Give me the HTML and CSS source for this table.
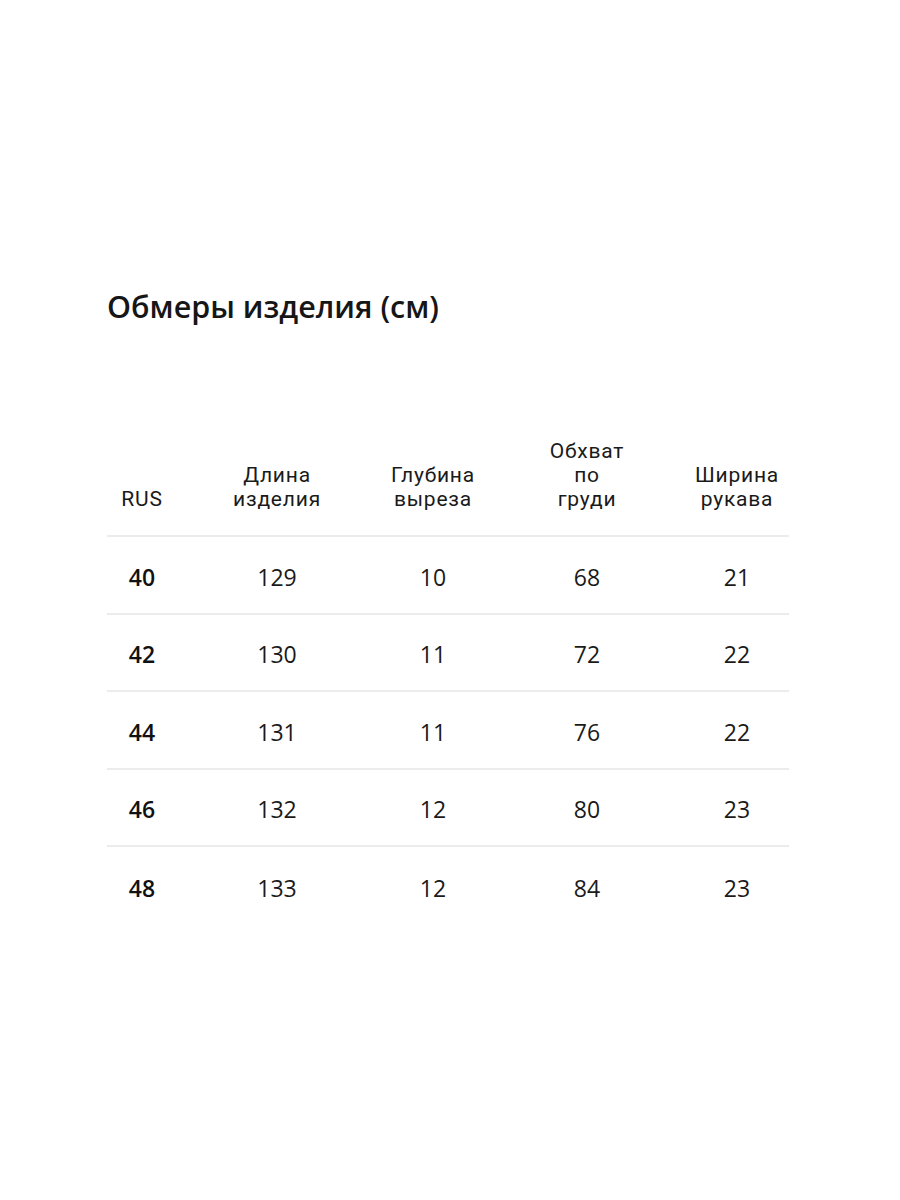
FILE: index.html
```html
<!DOCTYPE html>
<html lang="ru">
<head>
<meta charset="utf-8">
<link rel="stylesheet" href="styles.css">
</head>
<body>
<main class="page">
  <h1 class="title">Обмеры изделия (см)</h1>
  <div class="table">
    <div class="row head">
      <div class="cell">RUS</div>
      <div class="cell">Длина<br>изделия</div>
      <div class="cell">Глубина<br>выреза</div>
      <div class="cell">Обхват<br>по<br>груди</div>
      <div class="cell">Ширина<br>рукава</div>
    </div>
    <div class="row"><div class="cell size">40</div><div class="cell">129</div><div class="cell">10</div><div class="cell">68</div><div class="cell">21</div></div>
    <div class="row"><div class="cell size">42</div><div class="cell">130</div><div class="cell">11</div><div class="cell">72</div><div class="cell">22</div></div>
    <div class="row"><div class="cell size">44</div><div class="cell">131</div><div class="cell">11</div><div class="cell">76</div><div class="cell">22</div></div>
    <div class="row"><div class="cell size">46</div><div class="cell">132</div><div class="cell">12</div><div class="cell">80</div><div class="cell">23</div></div>
    <div class="row last"><div class="cell size">48</div><div class="cell">133</div><div class="cell">12</div><div class="cell">84</div><div class="cell">23</div></div>
  </div>
</main>
</body>
</html>
```

FILE: styles.css
```css
html, body {
  margin: 0;
  padding: 0;
  background: #ffffff;
}
body {
  font-family: "Open Sans", "Noto Sans", sans-serif;
  color: #111111;
}
.page {
  width: 900px;
  height: 1200px;
  box-sizing: border-box;
  padding: 283px 111px 0 107px;
}
.title {
  margin: 0;
  font-size: 30.5px;
  font-weight: 600;
  line-height: 46px;
  color: #161616;
}
.table {
  margin-top: 110px;
  width: 682px;
}
.row {
  display: grid;
  grid-template-columns: 70px 200px 112px 196px 104px;
  align-items: center;
  box-sizing: border-box;
  height: 77.5px;
  padding-top: 4px;
  border-bottom: 2px solid #ececec;
  font-size: 23px;
  color: #1a1a1a;
}
.row.last {
  border-bottom: none;
}
.row.head {
  height: auto;
  align-items: end;
  padding-top: 0;
  padding-bottom: 24px;
  font-family: Roboto, "Open Sans", sans-serif;
  font-size: 21px;
  letter-spacing: 0.8px;
  line-height: 24px;
  color: #1a1a1a;
}
.cell {
  text-align: center;
}
.size {
  font-weight: 600;
  color: #111;
}
```
